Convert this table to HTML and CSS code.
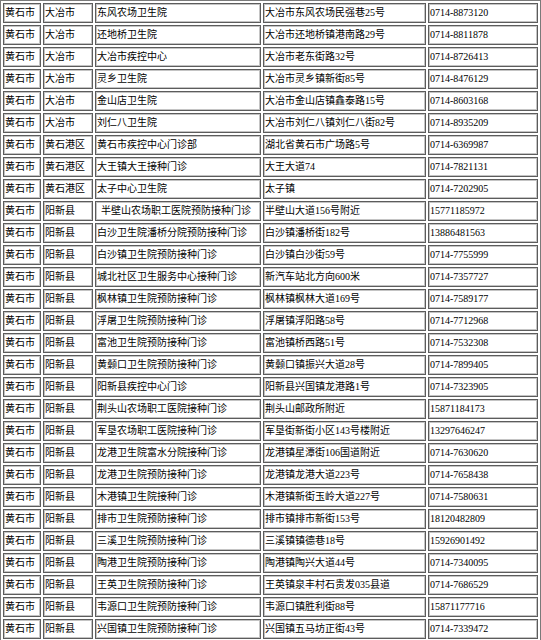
FILE: index.html
```html
<!DOCTYPE html>
<html lang="zh-CN">
<head>
<meta charset="utf-8">
<title>接种门诊</title>
<link rel="stylesheet" href="styles.css">
</head>
<body>
<table class="clinics">
<colgroup>
<col class="c-city"><col class="c-county"><col class="c-name"><col class="c-addr"><col class="c-tel">
</colgroup>
<tbody>
<tr><td>黄石市</td><td>大冶市</td><td>东风农场卫生院</td><td>大冶市东风农场民强巷25号</td><td>0714-8873120</td></tr>
<tr><td>黄石市</td><td>大冶市</td><td>还地桥卫生院</td><td>大冶市还地桥镇港南路29号</td><td>0714-8811878</td></tr>
<tr><td>黄石市</td><td>大冶市</td><td>大冶市疾控中心</td><td>大冶市老东街路32号</td><td>0714-8726413</td></tr>
<tr><td>黄石市</td><td>大冶市</td><td>灵乡卫生院</td><td>大冶市灵乡镇新街85号</td><td>0714-8476129</td></tr>
<tr><td>黄石市</td><td>大冶市</td><td>金山店卫生院</td><td>大冶市金山店镇鑫泰路15号</td><td>0714-8603168</td></tr>
<tr><td>黄石市</td><td>大冶市</td><td>刘仁八卫生院</td><td>大冶市刘仁八镇刘仁八街82号</td><td>0714-8935209</td></tr>
<tr><td>黄石市</td><td>黄石港区</td><td>黄石市疾控中心门诊部</td><td>湖北省黄石市广场路5号</td><td>0714-6369987</td></tr>
<tr><td>黄石市</td><td>黄石港区</td><td>大王镇大王接种门诊</td><td>大王大道74</td><td>0714-7821131</td></tr>
<tr><td>黄石市</td><td>黄石港区</td><td>太子中心卫生院</td><td>太子镇</td><td>0714-7202905</td></tr>
<tr><td>黄石市</td><td>阳新县</td><td class="indent">半壁山农场职工医院预防接种门诊</td><td>半壁山大道156号附近</td><td>15771185972</td></tr>
<tr><td>黄石市</td><td>阳新县</td><td>白沙卫生院潘桥分院预防接种门诊</td><td>白沙镇潘桥街182号</td><td>13886481563</td></tr>
<tr><td>黄石市</td><td>阳新县</td><td>白沙镇卫生院预防接种门诊</td><td>白沙镇白沙街59号</td><td>0714-7755999</td></tr>
<tr><td>黄石市</td><td>阳新县</td><td>城北社区卫生服务中心接种门诊</td><td>新汽车站北方向600米</td><td>0714-7357727</td></tr>
<tr><td>黄石市</td><td>阳新县</td><td>枫林镇卫生院预防接种门诊</td><td>枫林镇枫林大道169号</td><td>0714-7589177</td></tr>
<tr><td>黄石市</td><td>阳新县</td><td>浮屠卫生院预防接种门诊</td><td>浮屠镇浮阳路58号</td><td>0714-7712968</td></tr>
<tr><td>黄石市</td><td>阳新县</td><td>富池卫生院预防接种门诊</td><td>富池镇桥西路51号</td><td>0714-7532308</td></tr>
<tr><td>黄石市</td><td>阳新县</td><td>黄颡口卫生院预防接种门诊</td><td>黄颡口镇振兴大道28号</td><td>0714-7899405</td></tr>
<tr><td>黄石市</td><td>阳新县</td><td>阳新县疾控中心门诊</td><td>阳新县兴国镇龙港路1号</td><td>0714-7323905</td></tr>
<tr><td>黄石市</td><td>阳新县</td><td>荆头山农场职工医院接种门诊</td><td>荆头山邮政所附近</td><td>15871184173</td></tr>
<tr><td>黄石市</td><td>阳新县</td><td>军垦农场职工医院接种门诊</td><td>军垦街新街小区143号楼附近</td><td>13297646247</td></tr>
<tr><td>黄石市</td><td>阳新县</td><td>龙港卫生院富水分院接种门诊</td><td>龙港镇星潭街106国道附近</td><td>0714-7630620</td></tr>
<tr><td>黄石市</td><td>阳新县</td><td>龙港卫生院预防接种门诊</td><td>龙港镇龙港大道223号</td><td>0714-7658438</td></tr>
<tr><td>黄石市</td><td>阳新县</td><td>木港镇卫生院接种门诊</td><td>木港镇新街玉岭大道227号</td><td>0714-7580631</td></tr>
<tr><td>黄石市</td><td>阳新县</td><td>排市卫生院预防接种门诊</td><td>排市镇排市新街153号</td><td>18120482809</td></tr>
<tr><td>黄石市</td><td>阳新县</td><td>三溪卫生院预防接种门诊</td><td>三溪镇镇德巷18号</td><td>15926901492</td></tr>
<tr><td>黄石市</td><td>阳新县</td><td>陶港卫生院预防接种门诊</td><td>陶港镇陶兴大道44号</td><td>0714-7340095</td></tr>
<tr><td>黄石市</td><td>阳新县</td><td>王英卫生院预防接种门诊</td><td>王英镇泉丰村石贵发035县道</td><td>0714-7686529</td></tr>
<tr><td>黄石市</td><td>阳新县</td><td>韦源口卫生院预防接种门诊</td><td>韦源口镇胜利街88号</td><td>15871177716</td></tr>
<tr><td>黄石市</td><td>阳新县</td><td>兴国镇卫生院预防接种门诊</td><td>兴国镇五马坊正街43号</td><td>0714-7339472</td></tr>
</tbody>
</table>
</body>
</html>
```

FILE: styles.css
```css
html, body {
  margin: 0;
  padding: 0;
  background: #ffffff;
}

.clinics {
  table-layout: fixed;
  border-collapse: separate;
  border-spacing: 2px;
  border: 1px solid #7a7a7a;
  width: 541px;
  font-family: "Liberation Serif", "Noto Sans CJK SC", serif;
  font-size: 10px;
  color: #000000;
}

.c-city { width: 38px; }
.c-county { width: 50px; }
.c-name { width: 166px; }
.c-addr { width: 163px; }
.c-tel { width: 110px; }

.clinics td {
  box-sizing: border-box;
  height: 20px;
  padding: 0 1px;
  border: 1px solid #5c5c5c;
  box-shadow: inset 0 0 0 1px #c4c4c4;
  line-height: 16px;
  vertical-align: middle;
  white-space: nowrap;
  overflow: hidden;
}

.clinics td.indent {
  padding-left: 5px;
}
```
